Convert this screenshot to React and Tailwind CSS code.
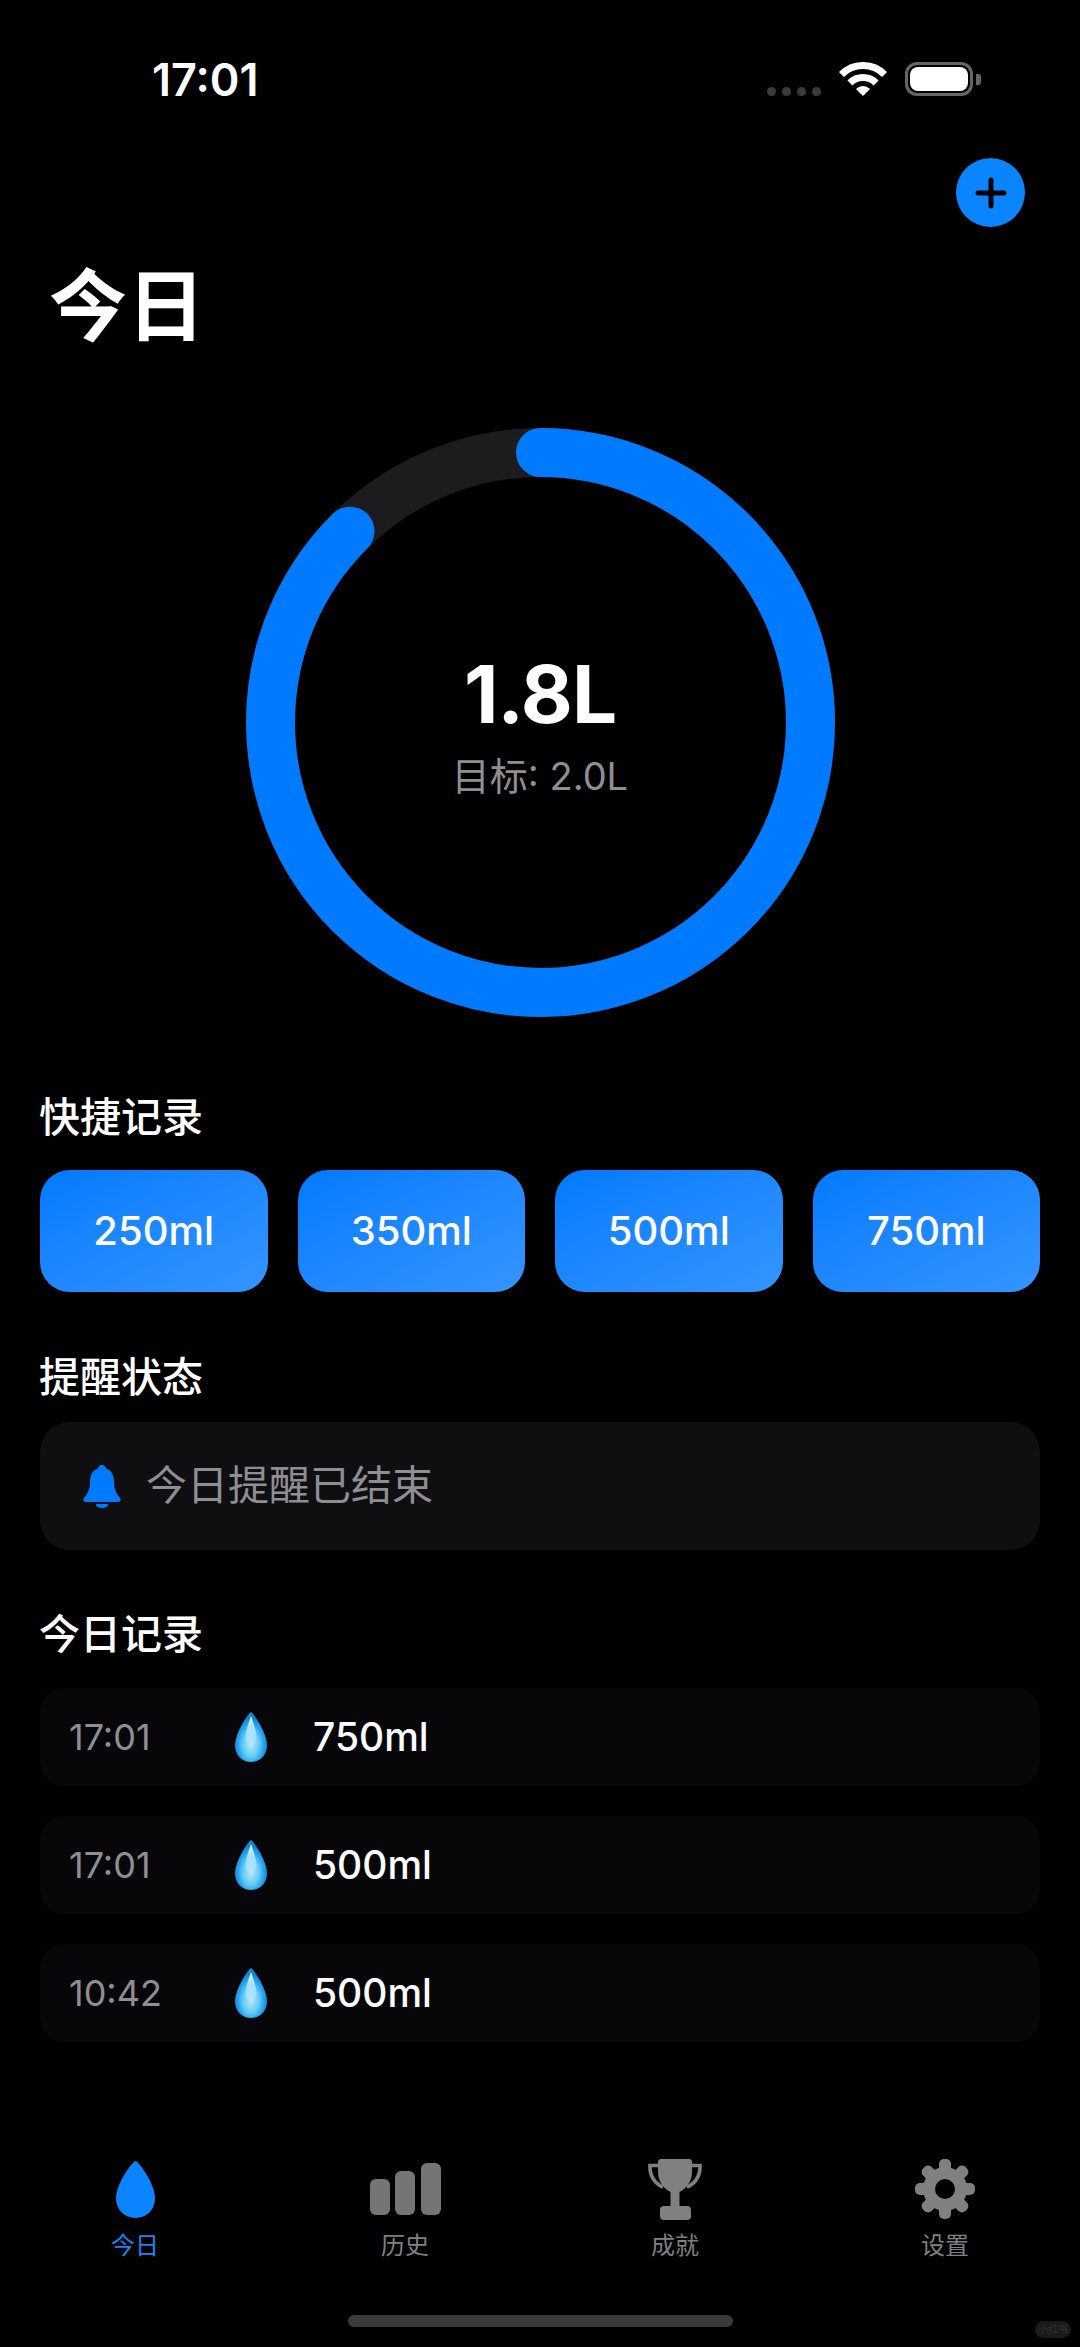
import React from "react";

const stack = "font-['Inter','Noto_Sans_CJK_SC',sans-serif]";

function Wifi() {
  return (
    <svg width="48" height="34" viewBox="0 0 48 34" fill="none">
      <path d="M2.43 12.43A30.5 30.5 0 0 1 45.57 12.43" stroke="#fff" strokeWidth="7" />
      <path d="M10.92 20.92A18.5 18.5 0 0 1 37.08 20.92" stroke="#fff" strokeWidth="7" />
      <path d="M24 34L17 27A9.9 9.9 0 0 1 31 27Z" fill="#fff" />
    </svg>
  );
}

function Battery() {
  return (
    <div className="flex items-center">
      <div className="w-[68px] h-[34px] rounded-[12px] border-[3px] border-[#666666] p-[2px]">
        <div className="w-full h-full rounded-[8px] bg-white" />
      </div>
      <div className="ml-[3px] w-[5px] h-[11px] rounded-r-[3px] bg-[#666666]" />
    </div>
  );
}

function Ring() {
  const r = 270;
  const c = 2 * Math.PI * r;
  return (
    <div className="relative w-[589px] h-[589px]">
      <svg width="589" height="589" viewBox="0 0 589 589" fill="none">
        <circle cx="294.5" cy="294.5" r={r} stroke="#1c1c1e" strokeWidth="49" />
        <circle
          cx="294.5"
          cy="294.5"
          r={r}
          stroke="#007aff"
          strokeWidth="49"
          strokeLinecap="round"
          strokeDasharray={`${c * 0.875} ${c}`}
          transform="rotate(-90 294.5 294.5)"
        />
      </svg>
      <div className="absolute inset-0 flex flex-col items-center justify-center">
        <div className="text-[80px] leading-[80px] font-bold text-white mt-[8px] tracking-[-1px]">1.8L</div>
        <div className="text-[38px] leading-[48px] text-[#8e8e93] mt-[18px]">目标: 2.0L</div>
      </div>
    </div>
  );
}

function QuickButton({ label }) {
  return (
    <div className="h-[122px] rounded-[30px] bg-gradient-to-br from-[#007aff] to-[#3395ff] flex items-center justify-center text-[40px] font-medium text-white">
      {label}
    </div>
  );
}

function Bell() {
  return (
    <svg width="38" height="43" viewBox="0 0 38 43" fill="#007aff">
      <path d="M19 0C21.5 0 23 2 23 3.5C29 5.500 31 11 31 17C31 24 33 28 37 33C38.500 35 37.500 37 35 37H3C.5 37-.5 35 1 33C5 28 7 24 7 17C7 11 9 5.500 15 3.500C15 2 16.500 0 19 0Z" />
      <path d="M13 39H25C25 42 22 43 19 43C16 43 13 42 13 39Z" />
    </svg>
  );
}

function EmojiDrop({ id }) {
  return (
    <svg width="32" height="50" viewBox="0 0 32 50">
      <defs>
        <radialGradient id={`d${id}`} cx="0.5" cy="0.64" r="0.52">
          <stop offset="0" stopColor="#b8e9ff" />
          <stop offset="0.5" stopColor="#62caf5" />
          <stop offset="0.78" stopColor="#22a4ea" />
          <stop offset="1" stopColor="#0c86d6" />
        </radialGradient>
        <linearGradient id={`h${id}`} x1="0" y1="0" x2="0" y2="1">
          <stop offset="0" stopColor="#ffffff" stopOpacity="0.95" />
          <stop offset="1" stopColor="#e2f6ff" stopOpacity="0.1" />
        </linearGradient>
      </defs>
      <path d="M16 0C17.500 0 32 20 32 33.500C32 43 25 50 16 50C7 50 0 43 0 33.500C0 20 14.500 0 16 0Z" fill={`url(#d${id})`} />
      <path d="M16 4C18 10 23 22 21 30C19 34 13 34 11 30C9 22 14 10 16 4Z" fill={`url(#h${id})`} />
    </svg>
  );
}

function Row({ time, ml, id }) {
  return (
    <div className="h-[98px] rounded-[24px] bg-[#070709] flex items-center pl-[29px]">
      <div className="w-[166px] text-[36px] text-[#8e8e93]">{time}</div>
      <EmojiDrop id={id} />
      <div className="ml-[46px] text-[39px] font-medium text-white">{ml}</div>
    </div>
  );
}

function Gear() {
  const angles = [0, 45, 90, 135, 180, 225, 270, 315];
  return (
    <svg width="60" height="60" viewBox="0 0 60 60" fill="#808080">
      <circle cx="30" cy="30" r="22" />
      {angles.map((a) => (
        <rect key={a} x="24" y="0" width="12" height="16" rx="5" transform={`rotate(${a} 30 30)`} />
      ))}
      <circle cx="30" cy="30" r="10" fill="#000" />
    </svg>
  );
}

function Trophy() {
  return (
    <svg width="54" height="61" viewBox="0 0 54 61" fill="#808080">
      <path d="M10 3Q10 0 13 0H41Q44 0 44 3V13C44 24 36 31 31.500 33V48H22.500V33C18 31 10 24 10 13Z" />
      <path d="M11 6.500H2C1.500 17 7 25 15 28M43 6.500H52C52.500 17 47 25 39 28" fill="none" stroke="#808080" strokeWidth="3.6" />
      <rect x="12" y="47" width="31" height="14" rx="4" />
    </svg>
  );
}

function Bars() {
  return (
    <div className="flex items-end gap-[5.5px] h-[52px]">
      <div className="w-[20px] h-[36px] rounded-[6px] bg-[#757575]" />
      <div className="w-[20px] h-[44px] rounded-[6px] bg-[#757575]" />
      <div className="w-[20px] h-[52px] rounded-[6px] bg-[#757575]" />
    </div>
  );
}

function Tab({ icon, label, active }) {
  return (
    <div className="flex flex-col items-center">
      <div className="h-[62px] flex items-center justify-center">{icon}</div>
      <div className={`mt-[12px] text-[24px] leading-[28px] ${active ? "text-[#1a85f0]" : "text-[#808080]"}`}>{label}</div>
    </div>
  );
}

function SectionTitle({ children }) {
  return <div className="pl-[39px] text-[41px] leading-[48px] text-white font-medium">{children}</div>;
}

export default function App() {
  return (
    <div className={`relative w-[1080px] h-[2347px] overflow-hidden bg-black text-white ${stack}`}>
      <div className="h-[158px] flex items-start justify-between pl-[152px] pr-[99px] pt-[58px]">
        <div className="text-[45px] leading-[44px] font-semibold">17:01</div>
        <div className="flex items-end gap-[18px] mt-[4px]">
          <div className="flex gap-[6px]">
            <div className="w-[9px] h-[9px] rounded-full bg-[#3a3a3a]" />
            <div className="w-[9px] h-[9px] rounded-full bg-[#3a3a3a]" />
            <div className="w-[9px] h-[9px] rounded-full bg-[#3a3a3a]" />
            <div className="w-[9px] h-[9px] rounded-full bg-[#3a3a3a]" />
          </div>
          <Wifi />
          <Battery />
        </div>
      </div>

      <div className="flex justify-end pr-[55px]">
        <div className="w-[69px] h-[69px] rounded-full bg-[#0a84ff] flex items-center justify-center">
          <svg width="32" height="32" viewBox="0 0 32 32" stroke="#000" strokeWidth="5" strokeLinecap="round">
            <path d="M16 3V29M3 16H29" />
          </svg>
        </div>
      </div>

      <div className="mt-[41px] pl-[49px] text-[78px] leading-[78px] font-bold">今日</div>

      <div className="mt-[82px] flex justify-center">
        <Ring />
      </div>

      <div className="mt-[76px]">
        <SectionTitle>快捷记录</SectionTitle>
      </div>
      <div className="mt-[29px] px-[40px] grid grid-cols-4 gap-[30px]">
        <QuickButton label="250ml" />
        <QuickButton label="350ml" />
        <QuickButton label="500ml" />
        <QuickButton label="750ml" />
      </div>

      <div className="mt-[61px]">
        <SectionTitle>提醒状态</SectionTitle>
      </div>
      <div className="mt-[21px] mx-[40px] h-[128px] rounded-[30px] bg-[#0f0f11] flex items-center pl-[43px]">
        <Bell />
        <div className="ml-[25px] text-[41px] text-[#8e8e93]">今日提醒已结束</div>
      </div>

      <div className="mt-[60px]">
        <SectionTitle>今日记录</SectionTitle>
      </div>
      <div className="mt-[30px] px-[40px] flex flex-col gap-[30px]">
        <Row time="17:01" ml="750ml" id="a" />
        <Row time="17:01" ml="500ml" id="b" />
        <Row time="10:42" ml="500ml" id="c" />
      </div>

      <div className="mt-[116px] grid grid-cols-4">
        <Tab
          active
          label="今日"
          icon={
            <svg width="39" height="57" viewBox="0 0 39 57" fill="#0a84ff">
              <path d="M19.500 0C22 0 39 22 39 37.500C39 48.500 30.500 57 19.500 57C8.500 57 0 48.500 0 37.500C0 22 17 0 19.500 0Z" />
            </svg>
          }
        />
        <Tab label="历史" icon={<Bars />} />
        <Tab label="成就" icon={<Trophy />} />
        <Tab label="设置" icon={<Gear />} />
      </div>

      <div className="mt-[55px] mx-auto w-[385px] h-[12px] rounded-full bg-[#3a3a3c]" />

      <div className="absolute left-[1035px] top-[2321px] w-[36px] h-[17px] rounded-full bg-[#1a1a1a] flex items-center justify-center text-[10px] leading-[17px] text-[#333333]">
        小红书
      </div>
    </div>
  );
}
